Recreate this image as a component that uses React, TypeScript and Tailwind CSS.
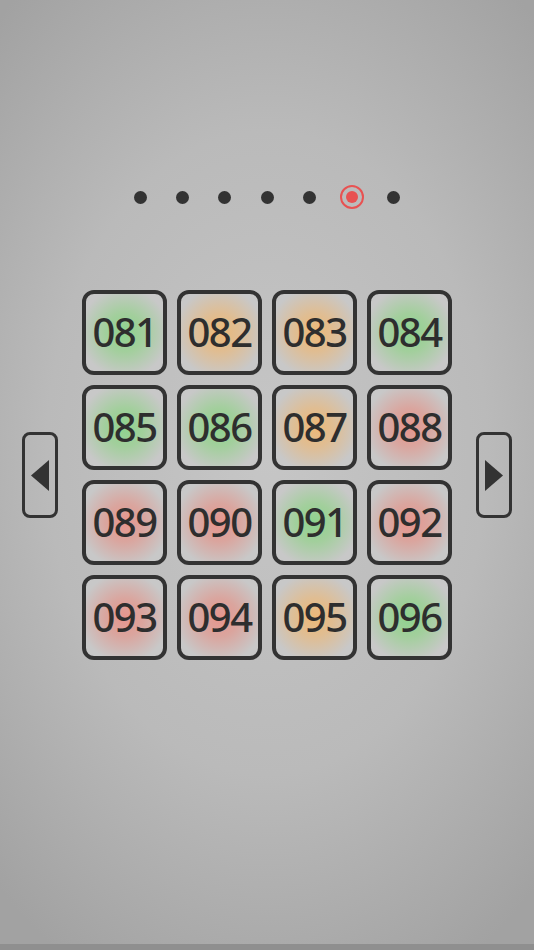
type Tone = "g" | "o" | "r";

const levels: { n: string; t: Tone }[] = [
  { n: "081", t: "g" },
  { n: "082", t: "o" },
  { n: "083", t: "o" },
  { n: "084", t: "g" },
  { n: "085", t: "g" },
  { n: "086", t: "g" },
  { n: "087", t: "o" },
  { n: "088", t: "r" },
  { n: "089", t: "r" },
  { n: "090", t: "r" },
  { n: "091", t: "g" },
  { n: "092", t: "r" },
  { n: "093", t: "r" },
  { n: "094", t: "r" },
  { n: "095", t: "o" },
  { n: "096", t: "g" },
];

const glow: Record<Tone, string> = {
  g: "bg-[radial-gradient(circle_at_center,#8ed28e_0%,#a2cf9c_35%,#c8c8c8_82%)]",
  o: "bg-[radial-gradient(circle_at_center,#ecb978_0%,#e0bd92_35%,#c8c8c8_82%)]",
  r: "bg-[radial-gradient(circle_at_center,#e6958d_0%,#daa59e_35%,#c8c8c8_82%)]",
};

function Arrow({ dir }: { dir: "left" | "right" }) {
  return (
    <button className="w-[36px] h-[86px] rounded-[8px] border-[3px] border-[#333] flex items-center justify-center">
      <svg width="18" height="31" viewBox="0 0 18 31">
        {dir === "left" ? (
          <polygon points="18,0 18,31 0,15.5" fill="#333" />
        ) : (
          <polygon points="0,0 0,31 18,15.5" fill="#333" />
        )}
      </svg>
    </button>
  );
}

export default function App() {
  return (
    <div
      className="w-[534px] h-[950px] flex flex-col items-center bg-[radial-gradient(ellipse_75%_62%_at_50%_48%,#c6c6c6_0%,#bababa_55%,#a2a2a2_100%)] border-b-[6px] border-[#8f8f8f]"
      style={{ fontFamily: '"Noto Sans", "Open Sans", sans-serif' }}
    >
      {/* page dots */}
      <div className="mt-[185px] h-[24px] flex items-center gap-[29.3px]">
        {[0, 1, 2, 3, 4, 5, 6].map((i) =>
          i === 5 ? (
            <div
              key={i}
              className="w-[24px] h-[24px] -mx-[5.5px] rounded-full border-[2.5px] border-[#e85252] flex items-center justify-center"
            >
              <div className="w-[12px] h-[12px] rounded-full bg-[#e85252]" />
            </div>
          ) : (
            <div key={i} className="w-[13px] h-[13px] rounded-full bg-[#333]" />
          )
        )}
      </div>

      {/* level grid */}
      <div className="mt-[81px] flex items-center gap-[24px]">
        <Arrow dir="left" />
        <div className="grid grid-cols-4 gap-[10px]">
          {levels.map((l) => (
            <div
              key={l.n}
              className={`w-[85px] h-[85px] rounded-[12px] border-[4px] border-[#333] flex items-center justify-center ${glow[l.t]}`}
            >
              <span className="text-[40px] font-medium leading-none tracking-[-1.5px] text-[#2e2e2e] pb-[2px]">
                {l.n}
              </span>
            </div>
          ))}
        </div>
        <Arrow dir="right" />
      </div>
    </div>
  );
}
